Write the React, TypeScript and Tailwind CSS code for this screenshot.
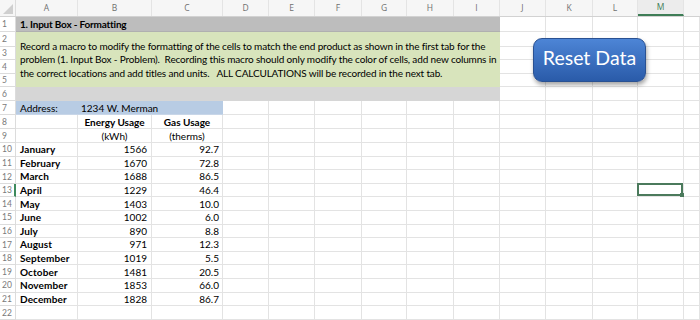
import React from "react";

const months: [string, string, string][] = [
  ["January", "1566", "92.7"],
  ["February", "1670", "72.8"],
  ["March", "1688", "86.5"],
  ["April", "1229", "46.4"],
  ["May", "1403", "10.0"],
  ["June", "1002", "6.0"],
  ["July", "890", "8.8"],
  ["August", "971", "12.3"],
  ["September", "1019", "5.5"],
  ["October", "1481", "20.5"],
  ["November", "1853", "66.0"],
  ["December", "1828", "86.7"],
];

const headers: { l: string; w: string }[] = [
  { l: "A", w: "w-[62px]" },
  { l: "B", w: "w-[74px]" },
  { l: "C", w: "w-[71px]" },
  { l: "D", w: "w-[46px]" },
  { l: "E", w: "w-[46px]" },
  { l: "F", w: "w-[47px]" },
  { l: "G", w: "w-[45px]" },
  { l: "H", w: "w-[47px]" },
  { l: "I", w: "w-[46px]" },
  { l: "J", w: "w-[46px]" },
  { l: "K", w: "w-[47px]" },
  { l: "L", w: "w-[45px]" },
  { l: "M", w: "w-[46px]" },
];

const cell = "shrink-0 border-r border-b border-[#e3e3e3] h-full";

function RowNum({ n, sel }: { n: number; sel?: boolean }) {
  return (
    <div
      className={`relative w-[16px] shrink-0 h-full flex items-center pl-[2px] pt-[1px] text-[8.5px] text-[#7a7a7a] border-r border-b border-[#dcdcdc] bg-white ${
        sel ? "border-r-2 border-r-[#3e8a5c]" : ""
      }`}
    >
      {n}
    </div>
  );
}

function RightCells({ from, selM }: { from: number; selM?: boolean }) {
  const cols = headers.slice(from);
  return (
    <>
      {cols.map((c) => (
        <div key={c.l} className={`${cell} ${c.w} relative`}>
          {selM && c.l === "M" && (
            <div className="absolute -left-[1px] -top-[1px] right-0 bottom-0 border-2 border-[#4b7a5c]">
              <div className="absolute -right-[3px] -bottom-[3px] w-[4px] h-[4px] bg-[#4b7a5c]" />
            </div>
          )}
        </div>
      ))}
      <div className={`${cell} flex-1`} />
    </>
  );
}

export default function App() {
  return (
    <div className="relative w-[700px] h-[320px] overflow-hidden bg-white font-[family-name:Lato,sans-serif] text-black">
      {/* Column header row */}
      <div className="flex h-[17px] bg-[#f6f6f6] border-b border-[#d2d2d2]">
        <div className="relative w-[16px] shrink-0 border-r border-[#dcdcdc]">
          <div className="absolute right-[2px] bottom-[2px] w-0 h-0 border-l-[10px] border-l-transparent border-b-[10px] border-b-[#cfcfcf]" />
        </div>
        {headers.map((h) => (
          <div
            key={h.l}
            className={`${h.w} shrink-0 flex items-center justify-center text-[8.5px] border-r border-[#e4e4e4] font-[family-name:'Open_Sans',sans-serif] ${
              h.l === "M" ? "text-[#3e7d56] border-b-2 border-b-[#3e7d56] bg-[#ececec]" : "text-[#6f6f6f]"
            }`}
          >
            {h.l}
          </div>
        ))}
        <div className="flex-1" />
      </div>

      {/* Rows 1-6 block */}
      <div className="flex">
        <div className="flex flex-col w-[16px] shrink-0">
          <div className="h-[15px]"><RowNum n={1} /></div>
          <div className="h-[15px]"><RowNum n={2} /></div>
          <div className="h-[13px]"><RowNum n={3} /></div>
          <div className="h-[14px]"><RowNum n={4} /></div>
          <div className="h-[13px]"><RowNum n={5} /></div>
          <div className="h-[14px]"><RowNum n={6} /></div>
        </div>
        <div className="flex flex-col w-[484px] shrink-0">
          <div className="h-[15px] bg-[#bdbdbd] flex items-center pl-[4px] pt-[1px] text-[10px] font-bold tracking-[-0.2px] border-b border-[#b0b0b0]">
            1. Input Box - Formatting
          </div>
          <div className="h-[55px] bg-[#d8e4bc] flex flex-col justify-center pl-[4px] pt-[1px] text-[10px] leading-[13.5px] tracking-[-0.15px] whitespace-nowrap">
            <div>Record a macro to modify the formatting of the cells to match the end product as shown in the first tab for the</div>
            <div>problem (1. Input Box - Problem).&nbsp; Recording this macro should only modify the color of cells, add new columns in</div>
            <div>the correct locations and add titles and units.&nbsp;&nbsp; ALL CALCULATIONS will be recorded in the next tab.</div>
          </div>
          <div className="h-[14px] bg-[#d6d6d6]" />
        </div>
        <div className="flex flex-col flex-1">
          <div className="h-[15px] flex"><RightCells from={9} /></div>
          <div className="h-[15px] flex"><RightCells from={9} /></div>
          <div className="h-[13px] flex"><RightCells from={9} /></div>
          <div className="h-[14px] flex"><RightCells from={9} /></div>
          <div className="h-[13px] flex"><RightCells from={9} /></div>
          <div className="h-[14px] flex"><RightCells from={9} /></div>
        </div>
      </div>

      {/* Row 7 */}
      <div className="flex h-[14px] text-[10px]">
        <RowNum n={7} />
        <div className="w-[207px] shrink-0 h-full bg-[#b8cce4] flex items-center pt-[1px] border-b border-[#c8d6e8]">
          <div className="w-[62px] pl-[4px]">Address:</div>
          <div className="pl-[3px]">1234 W. Merman</div>
        </div>
        <RightCells from={3} />
      </div>

      {/* Row 8 */}
      <div className="flex h-[14px] text-[10px]">
        <RowNum n={8} />
        <div className={`${cell} w-[62px]`} />
        <div className={`${cell} w-[74px] flex items-center justify-center pt-[1px] font-bold`}>Energy Usage</div>
        <div className={`${cell} w-[71px] flex items-center justify-center pt-[1px] font-bold`}>Gas Usage</div>
        <RightCells from={3} />
      </div>

      {/* Row 9 */}
      <div className="flex h-[14px] text-[10px]">
        <RowNum n={9} />
        <div className={`${cell} w-[62px]`} />
        <div className={`${cell} w-[74px] flex items-center justify-center pt-[1px]`}>(kWh)</div>
        <div className={`${cell} w-[71px] flex items-center justify-center pt-[1px]`}>(therms)</div>
        <RightCells from={3} />
      </div>

      {months.map(([m, e, g], i) => {
        const n = i + 10;
        return (
          <div key={m} className="flex h-[13.6px] text-[10px]">
            <RowNum n={n} sel={n === 13} />
            <div className={`${cell} w-[62px] flex items-center pl-[4px] pt-[1px] font-bold tracking-[0.1px] whitespace-nowrap`}>{m}</div>
            <div className={`${cell} w-[74px] flex items-center justify-end pr-[4px] pt-[1px]`}>{e}</div>
            <div className={`${cell} w-[71px] flex items-center justify-end pr-[3px] pt-[1px]`}>{g}</div>
            <RightCells from={3} selM={n === 13} />
          </div>
        );
      })}

      {/* Row 22 */}
      <div className="flex h-[14px] text-[10px]">
        <RowNum n={22} />
        <div className={`${cell} w-[62px]`} />
        <div className={`${cell} w-[74px]`} />
        <div className={`${cell} w-[71px]`} />
        <RightCells from={3} />
      </div>

      {/* Floating shape */}
      <div className="absolute left-[533px] top-[38px] w-[113px] h-[44px] rounded-[9px] bg-gradient-to-b from-[#4d85d6] to-[#2a5ba9] border border-[#2a5192] shadow-[1px_3px_4px_rgba(0,0,0,0.35)] flex items-center justify-center pb-[5px] text-white text-[19.5px] font-[family-name:Lato,sans-serif]">
        Reset Data
      </div>
    </div>
  );
}
